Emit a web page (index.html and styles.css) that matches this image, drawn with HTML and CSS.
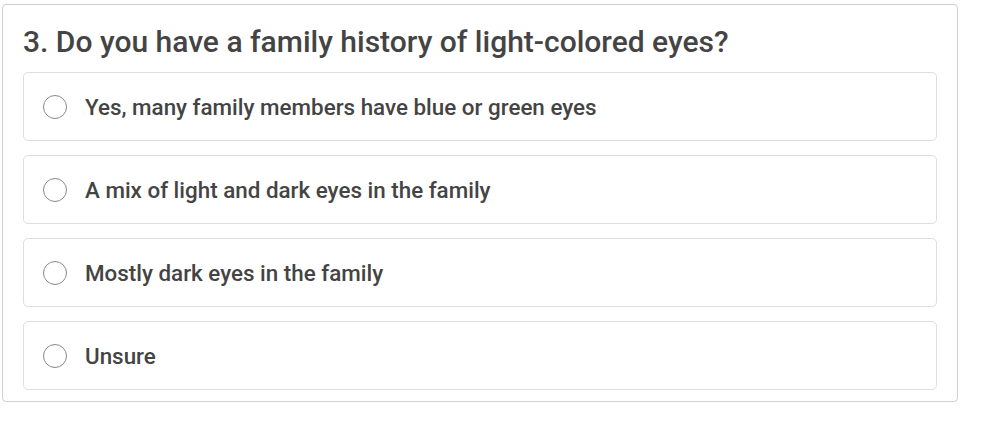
FILE: index.html
```html
<!DOCTYPE html>
<html>
<head>
<meta charset="utf-8">
<link rel="stylesheet" href="styles.css">
</head>
<body>
<div class="card">
  <h2 class="question">3. Do you have a family history of light-colored eyes?</h2>
  <div class="options">
    <label class="option"><span class="radio"></span><span class="label">Yes, many family members have blue or green eyes</span></label>
    <label class="option"><span class="radio"></span><span class="label">A mix of light and dark eyes in the family</span></label>
    <label class="option"><span class="radio"></span><span class="label">Mostly dark eyes in the family</span></label>
    <label class="option"><span class="radio"></span><span class="label">Unsure</span></label>
  </div>
</div>
</body>
</html>
```
FILE: styles.css
```css
html, body {
  margin: 0;
  padding: 0;
  background: #fff;
}
body {
  padding: 4px 0 0 2px;
  font-family: Roboto, "Noto Sans", sans-serif;
  color: #444;
}
.card {
  box-sizing: border-box;
  width: 956px;
  height: 398px;
  border: 1px solid #cfcfcf;
  border-radius: 4px;
  padding: 20px 20px 12px 20px;
}
.question {
  margin: 0 0 13px 0;
  font-size: 30px;
  font-weight: 500;
  line-height: 34px;
  color: #444;
}
.options {
  display: flex;
  flex-direction: column;
  gap: 14px;
}
.option {
  box-sizing: border-box;
  height: 69px;
  border: 1px solid #dedede;
  border-radius: 5px;
  display: flex;
  align-items: center;
  padding-left: 19px;
  gap: 18px;
}
.radio {
  box-sizing: border-box;
  width: 24px;
  height: 24px;
  border: 1.5px solid #888;
  border-radius: 50%;
  flex: none;
}
.label {
  font-size: 22.4px;
  font-weight: 500;
  color: #444;
}
```
